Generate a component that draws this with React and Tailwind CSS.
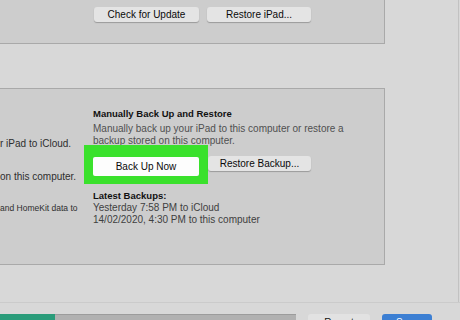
export default function App() {
    return (
        <div className="w-[460px] h-[320px] overflow-hidden bg-[#d8d8d8] flex flex-col font-['Liberation_Sans',Arial,sans-serif] text-[#1a1a1a]">
            <div className="h-[302px] shrink-0 w-[459px] border-r border-[#c2c2c2] flex flex-col">
                {/* top panel (cut off) */}
                <div className="h-[44px] w-[385px] bg-[#cdcdcd] border-r border-b border-[#a9a9a9] flex items-start gap-[8px] pt-[7px] pl-[94px]">
                    <button className="w-[105px] h-[15px] bg-[#e4e4e4] rounded-[3px] shadow-[0_1px_1px_rgba(0,0,0,0.25)] text-[10px] leading-[15px] text-center text-[#0a0a0a]">
                        Check for Update
                    </button>
                    <button className="w-[104px] h-[15px] bg-[#e4e4e4] rounded-[3px] shadow-[0_1px_1px_rgba(0,0,0,0.25)] text-[10px] leading-[15px] text-center text-[#0a0a0a]">
                        Restore iPad...
                    </button>
                </div>

                {/* backups panel */}
                <div className="mt-[44px] h-[177px] w-[385px] bg-[#cdcdcd] border-t border-r border-b border-[#a9a9a9] flex">
                    <div className="w-[84px] overflow-hidden whitespace-nowrap text-[#2e2e2e]">
                        <p className="mt-[49px] text-[10px] leading-[12px]">r iPad to iCloud.</p>
                        <p className="mt-[21px] text-[10px] leading-[12px]">on this computer.</p>
                        <p className="mt-[20px] text-[8.5px] leading-[11px]">and HomeKit data to</p>
                    </div>
                    <div className="pl-[9px] pt-[19px] flex flex-col">
                        <h3 className="text-[9.5px] font-bold leading-[12px] text-[#111]">Manually Back Up and Restore</h3>
                        <p className="mt-[3px] text-[10px] leading-[12px] text-[#505050]">
                            Manually back up your iPad to this computer or restore a
                            <br />
                            backup stored on this computer.
                        </p>
                        <div className="flex items-start -ml-[9px] -mt-[2px]">
                            <div className="bg-[#3ae12c] pt-[8px] pb-[7px] px-[9px]">
                                <button className="w-[106px] h-[19px] bg-[#fdfdfd] rounded-[2px] text-[10px] leading-[19px] text-center text-[#0a0a0a]">
                                    Back Up Now
                                </button>
                            </div>
                            <button className="mt-[11px] w-[103px] h-[15px] bg-[#e4e4e4] rounded-[3px] shadow-[0_1px_1px_rgba(0,0,0,0.25)] text-[10px] leading-[15px] text-center text-[#0a0a0a]">
                                Restore Backup...
                            </button>
                        </div>
                        <h3 className="mt-[6px] text-[9.5px] font-bold leading-[12px] text-[#111]">Latest Backups:</h3>
                        <p className="text-[10px] leading-[12px] text-[#3f3f3f]">
                            Yesterday 7:58 PM to iCloud
                            <br />
                            14/02/2020, 4:30 PM to this computer
                        </p>
                    </div>
                </div>
            </div>

            {/* bottom bar */}
            <div className="flex-1 min-h-0 overflow-hidden border-t border-[#cbcbcb] flex items-start pt-[11px]">
                <div className="shrink-0 w-[55px] h-[10px] bg-[#2a9c7a]" />
                <div className="shrink-0 w-[241px] h-[10px] bg-[#b1b1b1] border-t border-[#9c9c9c]" />
                <div className="shrink-0 ml-[12px] w-[62px] h-[16px] bg-[#e2e2e2] rounded-[3px] pt-[4px] text-[10px] leading-[10px] text-center text-[#111]">
                    Revert
                </div>
                <div className="shrink-0 ml-[12px] w-[50px] h-[16px] bg-[#3c7fd3] rounded-[3px] pt-[4px] text-[10px] leading-[10px] text-center text-white">
                    Sync
                </div>
            </div>
        </div>
    );
}
